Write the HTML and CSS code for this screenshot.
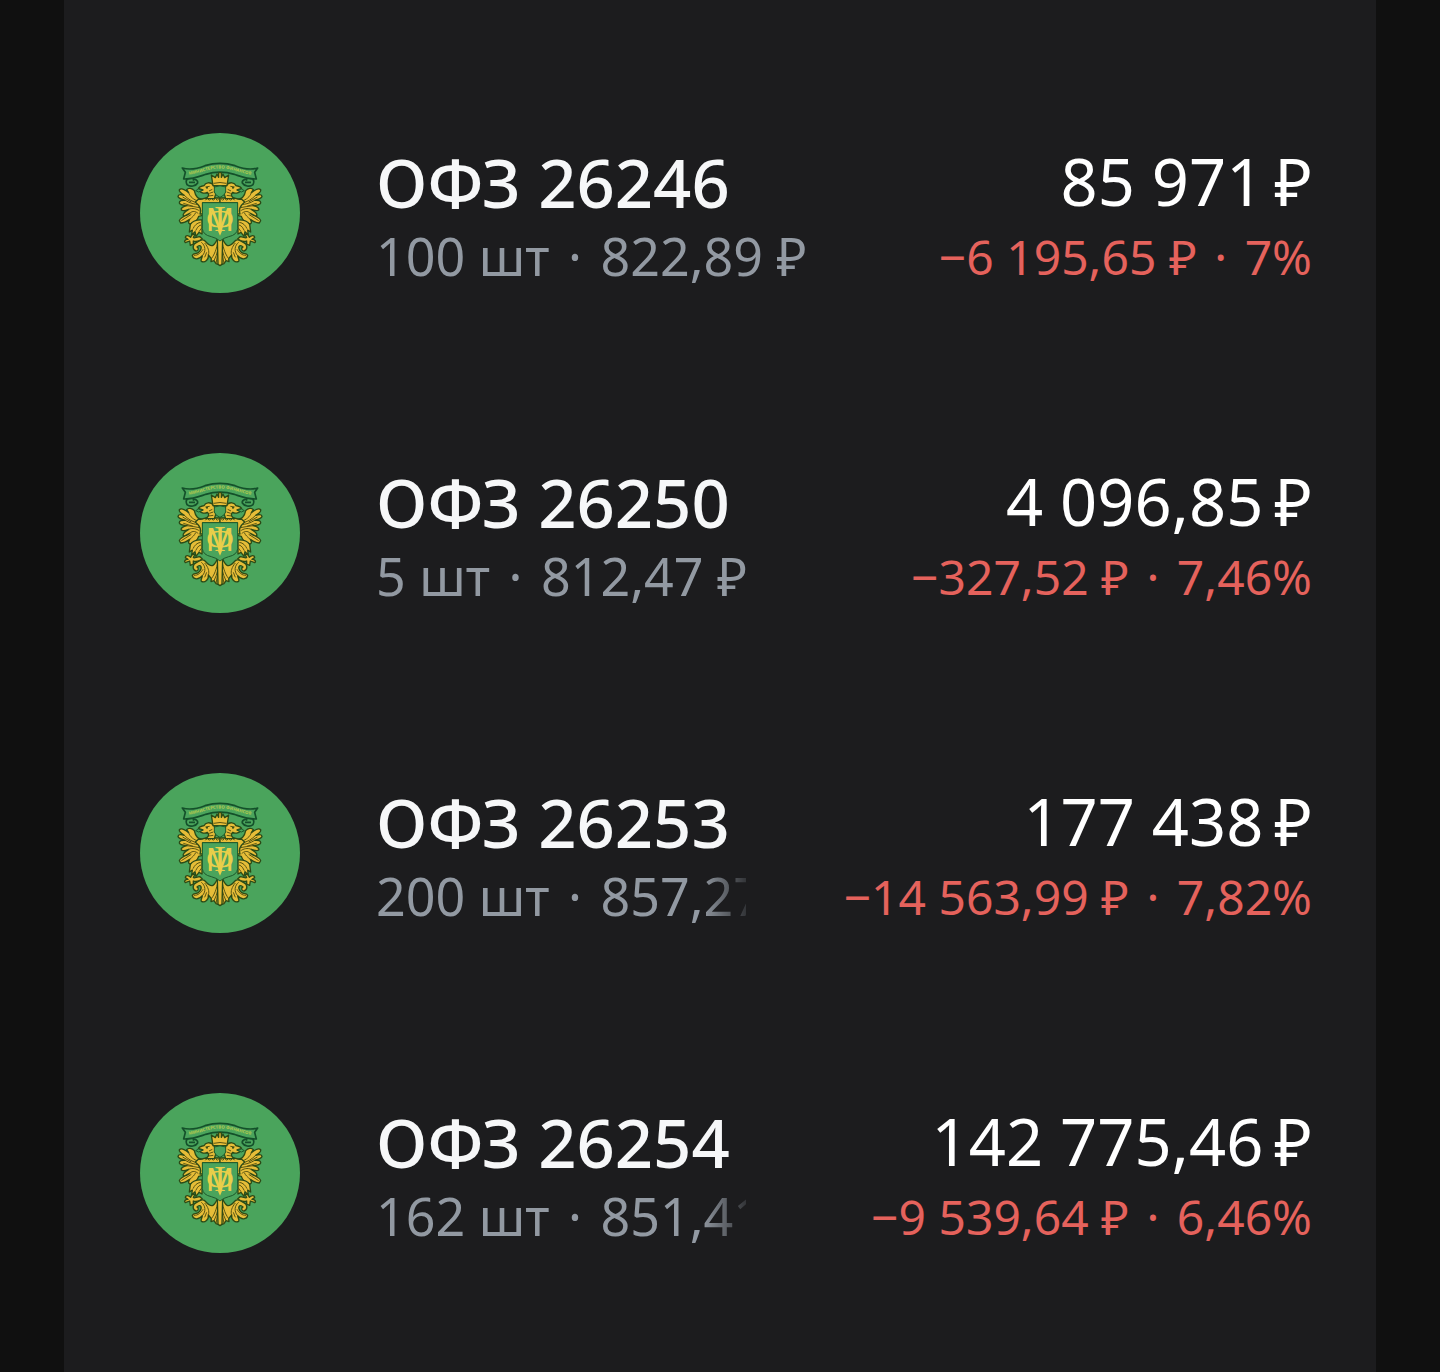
FILE: index.html
```
<!DOCTYPE html>
<html lang="ru">

<head>
  <meta charset="UTF-8">
  <meta name="viewport" content="width=device-width, initial-scale=1.0">
  <title>Облигации</title>
  <link rel="stylesheet" href="styles.css">
</head>

<body>
  <svg class="sprite" aria-hidden="true">
    <defs>
      <path id="ribbon-line" d="M172 165 Q200 160 225 153 Q270 138 315 153 Q340 160 368 165" />
      <!-- left half of the eagle, mirrored for the right one -->
      <g id="eagle-half">
        <!-- wing -->
        <path class="gold" d="M218 238 C204 238 196 228 193 212 C186 204 175 203 170 209 L176 218 C166 210 153 204 148 209 C146 216 155 221 163 226 C154 223 145 222 144 229 C145 236 156 238 166 241 C156 240 147 242 148 249 C150 256 162 256 171 257 C160 259 151 264 154 270 C159 274 168 271 176 268 C166 274 157 281 160 287 C165 290 172 285 179 280 C158 290 148 296 148 302 L152 309 C163 309 172 303 179 298 C175 304 174 311 180 312 C193 309 203 299 206 289 L218 286 Z" />
        <path class="line" d="M176 218 C180 230 191 240 206 243 M163 226 C174 237 187 246 205 249 M166 241 C179 249 191 253 208 254 M171 257 C184 258 195 261 209 263 M176 268 C188 263 199 266 209 273 M179 280 C188 271 198 274 205 281 M179 298 C188 291 194 285 197 278 M154 302 L184 283 M160 250 L190 259 M158 231 L184 246" />
        <!-- shoulder over the shield -->
        <path class="gold" d="M206 237 C220 241 224 231 232 234 H270 V249 H218 V282 H210 C215 270 208 256 196 246 Z" />
        <path class="line" d="M226 241 l6 -6 6 6 6 -6 6 6 6 -6 6 6 6 -6" />
        <!-- head and neck -->
        <path class="gold" d="M226 236 C236 231 239 224 232 217 C225 222 214 219 208 213 L219 210 L205 205 C210 197 217 199 222 197 C226 187 241 185 249 194 C260 204 259 221 253 236 Z" />
        <path class="line" d="M237 213 L247 208 M238 220 L250 216 M236 228 L250 226 M226 201 L239 199" />
        <circle class="eye" cx="231" cy="203" r="3" />
        <path class="green" d="M206 207 L197 212 L206 216 L217 211 Z" />
        <!-- leg -->
        <path class="gold" d="M216 300 C200 299 188 303 181 313 L178 336 L187 330 L185 345 L195 335 L198 349 L207 337 L216 342 Z" />
        <path class="line" d="M212 307 C200 309 194 316 189 326 M213 315 C204 317 201 325 197 332 M215 324 L207 335" />
        <!-- claw -->
        <path class="gold" d="M210 350 C199 351 192 356 190 352 L195 344 C188 340 184 347 182 352 C174 344 166 346 166 353 L174 358 C165 358 161 364 166 368 L179 363 L181 376 L190 372 L190 363 C199 367 210 362 217 357 Z" />
        <!-- tail -->
        <path class="gold" d="M263 355 C254 376 246 386 228 366 C218 352 208 364 199 368 C186 373 187 390 198 393 C206 393 207 383 201 381 C212 371 218 382 209 394 C202 405 188 397 187 407 C189 418 206 421 217 407 C216 417 211 417 214 424 C225 430 237 418 235 405 L244 416 L243 425 L252 422 L258 431 L270 435 V360 Z" />
        <path class="line" d="M217 407 C229 394 226 376 214 367 M235 405 C239 394 234 381 224 369 M244 416 C258 398 261 376 265 361 M252 422 C263 402 264 382 268 362 M258 431 L264 396 M224 412 L230 397 M192 406 C204 407 214 397 219 388" />
      </g>
      <symbol id="minfin" viewBox="30 39 480 480">
        <circle class="disc" cx="270" cy="279" r="240" />
        <use href="#eagle-half" />
        <use href="#eagle-half" transform="translate(540 0) scale(-1 1)" />
        <path class="gold" d="M262 355 H278 L276 432 L270 437 L264 432 Z" />
        <!-- ribbon -->
        <g class="ribbon">
          <path d="M192 174 C171 169 165 181 171 194 C180 202 198 198 203 189 C205 181 195 175 188 181 M348 174 C369 169 375 181 369 194 C360 202 342 198 337 189 C335 181 345 175 352 181" />
          <path d="M157 144 C181 151 205 145 225 137 Q270 123 315 137 C335 145 359 151 383 144 L374 157 L379 177 C350 178 331 169 313 163 Q270 150 227 163 C209 169 190 178 161 177 L166 157 Z" />
          <path d="M177 187 h18 M345 187 h18" />
        </g>
        <text class="motto" text-anchor="middle"><textPath href="#ribbon-line" startOffset="50%">МИНИСТЕРСТВО ФИНАНСОВ</textPath></text>
        <!-- crown -->
        <path class="gold" d="M249 197 L244 165 L256 173 L261 162 L266 172 L266 158 H274 L274 172 L279 162 L284 173 L296 165 L291 197 Z" />
        <path class="line" d="M251 190 Q270 185 289 190" />
        <path class="green" d="M253 201 Q270 194 287 201 V216 Q285 226 270 232 Q255 226 253 216 Z" />
        <!-- shield -->
        <path class="shield" d="M217 248 H323 V326 Q321 345 296 350 Q280 354 270 363 Q260 354 244 350 Q219 345 217 326 Z" />
        <g class="monogram" text-anchor="middle">
          <text class="monogram-m" x="270" y="334">М</text>
          <text class="monogram-f" x="270" y="334">Ф</text>
        </g>
        <path class="tip" d="M263 331 H277 L270 347 Z" />
      </symbol>
    </defs>
  </svg>

  <main class="panel">
    <ul class="bonds">
      <li class="bond">
        <svg class="bond-logo" aria-hidden="true"><use href="#minfin" /></svg>
        <div class="bond-info">
          <h2 class="bond-name">ОФЗ 26246</h2>
          <p class="bond-count">100 шт <span class="dot">·</span> 822,89 ₽</p>
        </div>
        <div class="bond-value">
          <p class="bond-total">85 971&#8239;₽</p>
          <p class="bond-change">−6 195,65 ₽ <span class="dot">·</span> 7%</p>
        </div>
      </li>
      <li class="bond">
        <svg class="bond-logo" aria-hidden="true"><use href="#minfin" /></svg>
        <div class="bond-info">
          <h2 class="bond-name">ОФЗ 26250</h2>
          <p class="bond-count">5 шт <span class="dot">·</span> 812,47 ₽</p>
        </div>
        <div class="bond-value">
          <p class="bond-total">4 096,85&#8239;₽</p>
          <p class="bond-change">−327,52 ₽ <span class="dot">·</span> 7,46%</p>
        </div>
      </li>
      <li class="bond">
        <svg class="bond-logo" aria-hidden="true"><use href="#minfin" /></svg>
        <div class="bond-info">
          <h2 class="bond-name">ОФЗ 26253</h2>
          <p class="bond-count fade">200 шт <span class="dot">·</span> 857,27</p>
        </div>
        <div class="bond-value">
          <p class="bond-total">177 438&#8239;₽</p>
          <p class="bond-change">−14 563,99 ₽ <span class="dot">·</span> 7,82%</p>
        </div>
      </li>
      <li class="bond">
        <svg class="bond-logo" aria-hidden="true"><use href="#minfin" /></svg>
        <div class="bond-info">
          <h2 class="bond-name">ОФЗ 26254</h2>
          <p class="bond-count fade">162 шт <span class="dot">·</span> 851,41</p>
        </div>
        <div class="bond-value">
          <p class="bond-total">142 775,46&#8239;₽</p>
          <p class="bond-change">−9 539,64 ₽ <span class="dot">·</span> 6,46%</p>
        </div>
      </li>
    </ul>
  </main>
</body>

</html>
```
FILE: styles.css
```
* {
  margin: 0;
  padding: 0;
  box-sizing: border-box;
}

body {
  background-color: #101010;
  font-family: "Noto Sans", "Open Sans", sans-serif;
}

.sprite {
  position: absolute;
  width: 0;
  height: 0;
}

.panel {
  min-height: 100vh;
  margin: 0 64px;
  padding: 53px 64px 0 76px;
  background-color: #1c1c1e;
}

.bonds {
  list-style: none;
}

.bond {
  display: flex;
  align-items: center;
  height: 320px;
}

.bond-logo {
  flex: none;
  width: 160px;
  height: 160px;
  margin-right: 76px;
}

.bond-info,
.bond-value {
  padding-top: 6px;
}

.bond-info {
  flex: 1;
  min-width: 0;
}

.bond-value {
  flex: none;
  text-align: right;
}

.bond-name,
.bond-total {
  line-height: 80px;
  white-space: nowrap;
}

.bond-name {
  font-size: 67px;
  font-weight: 500;
  color: #f6f7f8;
}

.bond-total {
  font-size: 65px;
  font-weight: 400;
  color: #fff;
}

.bond-count,
.bond-change {
  line-height: 68px;
  white-space: nowrap;
}

.bond-count {
  font-size: 52px;
  color: #9299a2;
}

.bond-change {
  margin-top: 2px;
  font-size: 48px;
  color: #e5625c;
}

.dot {
  margin: 0 5px;
}

.fade {
  max-width: 370px;
  overflow: hidden;
  -webkit-mask-image: linear-gradient(90deg, #000 88%, rgba(0, 0, 0, .2) 100%);
  mask-image: linear-gradient(90deg, #000 88%, rgba(0, 0, 0, .2) 100%);
}

/* emblem */
.disc {
  fill: #4aa45c;
}

.gold {
  fill: #e6bd38;
  stroke: #2c4a16;
  stroke-width: 4;
  stroke-linejoin: round;
}

.line {
  fill: none;
  stroke: #5a5512;
  stroke-width: 3;
}

.eye {
  fill: #2c4a16;
}

.green,
.shield {
  fill: #4aa45c;
  stroke: #1d5a2c;
  stroke-width: 3;
}

.ribbon {
  fill: #4aa45c;
  stroke: #14502a;
  stroke-width: 5;
  stroke-linejoin: round;
}

.motto {
  font-size: 13px;
  font-weight: 700;
  fill: #b3c94f;
}

.monogram {
  fill: #e8cf4a;
}

.monogram-m {
  font-family: "Liberation Sans", sans-serif;
  font-size: 100px;
}

.monogram-f {
  font-family: "Liberation Serif", serif;
  font-size: 106px;
}

.tip {
  fill: #e8cf4a;
}
```
